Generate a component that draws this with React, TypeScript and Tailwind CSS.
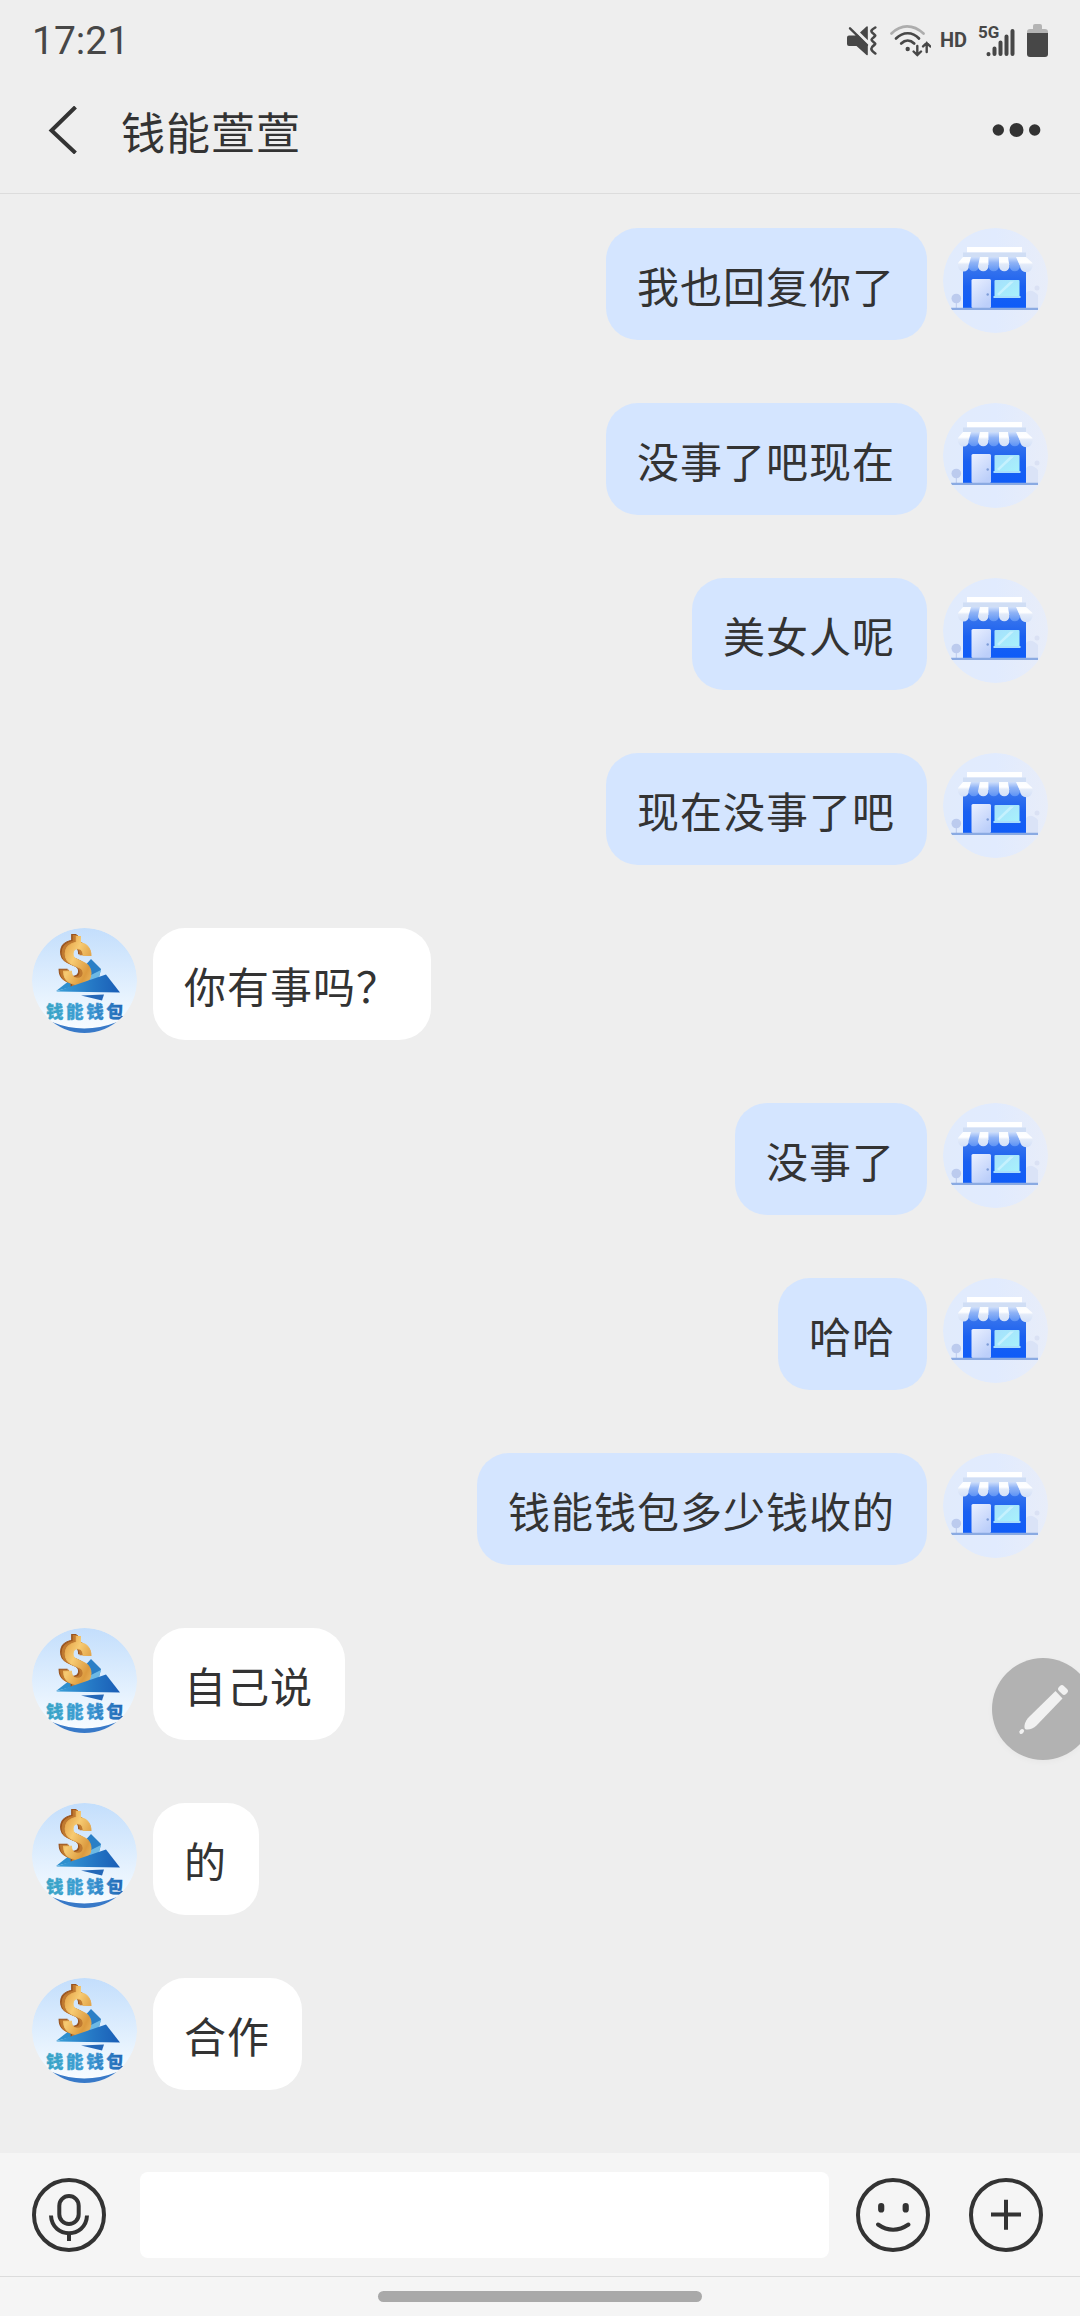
import { ReactNode } from "react";

type Message = {
  id: number;
  from: "me" | "them";
  text: string;
};

const MESSAGES: Message[] = [
  { id: 1, from: "me", text: "我也回复你了" },
  { id: 2, from: "me", text: "没事了吧现在" },
  { id: 3, from: "me", text: "美女人呢" },
  { id: 4, from: "me", text: "现在没事了吧" },
  { id: 5, from: "them", text: "你有事吗？" },
  { id: 6, from: "me", text: "没事了" },
  { id: 7, from: "me", text: "哈哈" },
  { id: 8, from: "me", text: "钱能钱包多少钱收的" },
  { id: 9, from: "them", text: "自己说" },
  { id: 10, from: "them", text: "的" },
  { id: 11, from: "them", text: "合作" },
];

const StatusBar = () => (
  <div className="flex h-20 items-start justify-between pl-8 pr-8 text-[#474747]">
    <span className="mt-[18px] font-['Roboto',sans-serif] text-[39px] leading-[46px]">17:21</span>

    <div className="mt-6 flex items-start">
      {/* Muted / vibrate */}
      <svg className="mt-0.5 h-[31px] w-[31px]" viewBox="0 0 31 31" fill="currentColor">
        <path d="M13 6.500 19.500.500q1.300-.700 1.300.700v13z" />
        <path d="M2 9.500h6l2.500-1L20.800 19v9.500q0 1.300-1.300.500L9.500 20H2a2 2 0 0 1-2-2v-6.500a2 2 0 0 1 2-2z" />
        <path d="M3 2.300 20 19" fill="none" stroke="currentColor" strokeWidth="2.4" strokeLinecap="round" />
        <path
          d="M28.300 1.500c-5 3-5 4-1.500 6.500 2 1.500 2 1.500 0 3.200-3 2.400-3 2.600 0 5 2 1.500 2 1.500 0 3.200-3.500 2.600-3.500 4.600 1.500 8.100"
          fill="none"
          stroke="currentColor"
          strokeWidth="2.6"
          strokeLinecap="round"
        />
      </svg>

      {/* Wifi with traffic arrows */}
      <svg className="ml-3 h-[33px] w-[41px]" viewBox="0 0 41 33" fill="none" stroke="currentColor" strokeLinecap="round">
        <path d="M1.500 9.500C11 0 23 0 33.500 9.500" stroke="#adadad" strokeWidth="2.7" />
        <path d="M6 14.500c7-7 16.500-7 23 0" strokeWidth="2.7" />
        <path d="M11.200 19.500c4-4 9-4 13 0" strokeWidth="2.7" />
        <circle cx="17.700" cy="25" r="2.2" fill="currentColor" stroke="none" />
        <path d="M27.300 22v9m-3.700-3.500 3.700 3.500 3.700-3.500M36.700 28v-9m-3.600 3.400 3.600-3.400 3.600 3.400" strokeWidth="2.4" />
      </svg>

      <span className="ml-[9px] mt-[5px] font-['Roboto',sans-serif] text-[20px] font-bold leading-[23px]">HD</span>

      {/* Signal */}
      <div className="relative ml-[11px] h-[33px] w-[37px]">
        <span className="absolute left-0 -top-[1px] font-['Roboto',sans-serif] text-[17px] font-bold leading-[18px]">5G</span>
        <svg className="h-[33px] w-[37px]" viewBox="0 0 37 33" fill="none" stroke="currentColor" strokeWidth="4" strokeLinecap="round">
          <path d="M10.500 30v.3M16.500 24.500V30M22.500 18.500V30M28.500 12.500V30M34.500 7V30" />
        </svg>
      </div>

      {/* Battery */}
      <svg className="ml-3 h-[33px] w-[21px]" viewBox="0 0 21 33">
        <path d="M8 0h5a2 2 0 0 1 2 2v3h3a3 3 0 0 1 3 3v2H0V8a3 3 0 0 1 3-3h3V2a2 2 0 0 1 2-2z" fill="#b4b4b4" />
        <path d="M0 9h21v21a3 3 0 0 1-3 3H3a3 3 0 0 1-3-3z" fill="currentColor" />
      </svg>
    </div>
  </div>
);

const Header = () => (
  <header className="h-[194px] border-b border-[#dcdcdc]">
    <StatusBar />
    <div className="flex h-[100px] items-center pl-12 pr-[38px] text-[#333]">
      <svg className="h-[48px] w-[30px]" viewBox="0 0 30 48" fill="none" stroke="currentColor" strokeWidth="4">
        <path d="M27.500 1 3.500 24.500l24 22.500" />
      </svg>
      <h1 className="ml-[43px] mt-px text-[44px] leading-[60px] tracking-[1px]">钱能萱萱</h1>
      <svg className="ml-auto h-[14px] w-[50px]" viewBox="0 0 50 14" fill="currentColor">
        <circle cx="6.3" cy="7" r="5.7" />
        <circle cx="24.500" cy="7" r="7" />
        <circle cx="42.7" cy="7" r="5.7" />
      </svg>
    </div>
  </header>
);

const StoreAvatar = () => (
  <svg className="h-[105px] w-[105px] shrink-0 rounded-full" viewBox="0 0 105 105">
    <defs>
      <linearGradient id="storeSky" x1="0" y1="0" x2="1" y2="0">
        <stop offset="0" stopColor="#e1ebfc" />
        <stop offset="0.5" stopColor="#e1ebfe" />
        <stop offset="1" stopColor="#e8edf9" />
      </linearGradient>
      <linearGradient id="storeWall" x1="0" y1="0" x2="0" y2="1">
        <stop offset="0" stopColor="#3d78ec" />
        <stop offset="0.5" stopColor="#1a60f0" />
        <stop offset="1" stopColor="#0f5cf8" />
      </linearGradient>
      <linearGradient id="storeDoor" x1="0" y1="0" x2="0.6" y2="1">
        <stop offset="0" stopColor="#eaf0ff" />
        <stop offset="1" stopColor="#bccffa" />
      </linearGradient>
      <linearGradient id="storeGlass" x1="0" y1="0" x2="1" y2="1">
        <stop offset="0" stopColor="#a5e0fc" />
        <stop offset="1" stopColor="#a8f2fb" />
      </linearGradient>
      <linearGradient id="awningWhite" x1="0" y1="0" x2="0" y2="1">
        <stop offset="0" stopColor="#fbfdff" />
        <stop offset="0.35" stopColor="#ffffff" />
        <stop offset="0.5" stopColor="#e3ebf9" />
        <stop offset="1" stopColor="#d3e0f8" />
      </linearGradient>
      <linearGradient id="awningBlue" x1="0" y1="0" x2="0" y2="1">
        <stop offset="0" stopColor="#cfdffb" />
        <stop offset="0.4" stopColor="#8fb3f6" />
        <stop offset="1" stopColor="#5d93f5" />
      </linearGradient>
    </defs>
    <circle cx="52.500" cy="52.500" r="52.500" fill="url(#storeSky)" />
    <path d="M83 80V65c4-4 8-2 12 2v13z" fill="#dae3f7" />
    <circle cx="94" cy="60" r="2.5" fill="#dae1f4" />
    <circle cx="13.3" cy="70.500" r="4.8" fill="#bccbee" />
    <path d="M13.300 72v8" stroke="#bccbee" />
    <path d="M20 37h63v43H20z" fill="url(#storeWall)" />
    <path d="M24 19h55v5.500H24z" fill="#fff" />
    <path d="M20 24.500h63v4.500H20z" fill="#d0def5" />
    {/* Awning stripes */}
    <path d="M20 29h10l-4 9a5.500 5.500 0 0 1-11 0v-3z" fill="url(#awningWhite)" />
    <path d="M28 29h9l-1 9a5.200 5.200 0 0 1-10.500 0z" fill="url(#awningBlue)" />
    <path d="M37 29h8.500v9a5.200 5.200 0 0 1-10.500 0z" fill="url(#awningWhite)" />
    <path d="M45.500 29h10.500v9a5.200 5.200 0 0 1-10.500 0z" fill="url(#awningBlue)" />
    <path d="M56 29h9l1.500 9a5.200 5.200 0 0 1-10.500 0z" fill="url(#awningWhite)" />
    <path d="M65 29h9l3 9a5.200 5.200 0 0 1-10.500 0z" fill="url(#awningBlue)" />
    <path d="M73 29h10l6.500 6v3a6 6 0 0 1-12.500 0z" fill="url(#awningWhite)" />
    <rect x="28.500" y="51" width="19.500" height="29" rx="1.5" fill="url(#storeDoor)" />
    <circle cx="44.7" cy="66.500" r="1.2" fill="#7f9dd8" />
    <rect x="51.500" y="52" width="25" height="17" rx="1" fill="url(#storeGlass)" />
    <path d="M54 66 67 53.500h4L56 67.500z" fill="#d1f5ff" opacity="0.7" />
    <path d="M50.500 68h27v2h-27z" fill="#a9dffc" />
    <path d="M8 79.700h87v2.300H8z" fill="#8aaae2" />
  </svg>
);

const WalletAvatar = () => (
  <svg className="h-[105px] w-[105px] shrink-0 rounded-full" viewBox="0 0 105 105">
    <defs>
      <linearGradient id="walletSky" x1="0" y1="0" x2="0" y2="1">
        <stop offset="0" stopColor="#c3defc" />
        <stop offset="0.6" stopColor="#e4f1fe" />
        <stop offset="1" stopColor="#fafdff" />
      </linearGradient>
      <linearGradient id="walletGold" x1="0" y1="0" x2="1" y2="1">
        <stop offset="0" stopColor="#d98a2c" />
        <stop offset="0.4" stopColor="#f7cb72" />
        <stop offset="0.7" stopColor="#dc9a3e" />
        <stop offset="1" stopColor="#f6cf7d" />
      </linearGradient>
      <linearGradient id="walletBlue" x1="0" y1="0" x2="1" y2="0">
        <stop offset="0" stopColor="#3aa0d8" />
        <stop offset="0.6" stopColor="#2476c4" />
        <stop offset="1" stopColor="#1a5db6" />
      </linearGradient>
      <linearGradient id="walletName" x1="0" y1="0" x2="1" y2="0">
        <stop offset="0" stopColor="#3aa6c6" />
        <stop offset="0.5" stopColor="#3d9bd4" />
        <stop offset="1" stopColor="#1f63b4" />
      </linearGradient>
    </defs>
    <circle cx="52.500" cy="52.500" r="52.500" fill="url(#walletSky)" />
    <path d="M59 31 69 41l-2 8-14 6-12-4z" fill="#2a7fc6" />
    <path d="m57 48 12-6-2 7-9 4z" fill="#6db9e4" />
    <path d="m24 63 18-14 6 8z" fill="#2e8fce" />
    {/* Coin symbol, dark copies behind give it depth */}
    <g fontFamily="Roboto, sans-serif" fontWeight="700" fontSize="57">
      <text x="24.500" y="54" fill="#9a531d" stroke="#9a531d" strokeWidth="1">$</text>
      <text x="26" y="54.500" fill="#c07a30" stroke="#c07a30" strokeWidth="1">$</text>
      <text x="29" y="55.500" fill="url(#walletGold)" stroke="url(#walletGold)" strokeWidth="0.8">$</text>
    </g>
    <path d="m24 63.500 50-17 14 18z" fill="url(#walletBlue)" />
    <path d="m49 67.500 23-1-2 6z" fill="#2467b8" />
    <text
      x="14"
      y="90"
      fill="url(#walletName)"
      stroke="url(#walletName)"
      strokeWidth="0.3"
      fontFamily="'Noto Sans CJK SC', sans-serif"
      fontWeight="900"
      fontSize="17.500"
      letterSpacing="2.6"
    >
      钱能钱包
    </text>
    <path d="M20 94q32 13 65 0l-6 11H26z" fill="#3879c8" />
  </svg>
);

const MessageRow = ({ from, text }: Message) => {
  const mine = from === "me";

  return (
    <li className={`flex items-start gap-4 ${mine ? "flex-row-reverse" : ""}`}>
      {mine ? <StoreAvatar /> : <WalletAvatar />}
      <p
        className={`h-[112px] rounded-[32px] pl-[31px] pr-8 pt-[26px] text-[42px] leading-[62px] tracking-[1px] text-[#333] ${
          mine ? "bg-[#d4e5ff]" : "bg-white"
        }`}
      >
        {text}
      </p>
    </li>
  );
};

const RoundIcon = ({ children }: { children: ReactNode }) => (
  <svg className="h-[74px] w-[74px] shrink-0" viewBox="0 0 74 74" fill="none" stroke="#333" strokeWidth="4">
    <circle cx="37" cy="37" r="35" />
    {children}
  </svg>
);

const Composer = () => (
  <footer className="h-[163px] bg-[#f5f5f5]">
    <div className="flex h-[124px] items-center border-b border-[#dcdcdc] pl-8 pr-[37px]">
      <RoundIcon>
        <rect x="27.300" y="18" width="19.400" height="28" rx="9.7" />
        <path d="M19 37.500c1 23.500 35 23.500 36 0M37 54.500V63" />
      </RoundIcon>
      <input className="ml-[34px] h-[86px] w-[689px] rounded-lg bg-white outline-none" />
      <div className="ml-auto flex gap-[39.5px]">
        <RoundIcon>
          <path d="M25.200 28v3.500M49.700 28v3.500" strokeWidth="6.2" strokeLinecap="round" />
          <path d="M22 46.500q15 10.500 30.500 0" strokeLinecap="round" />
        </RoundIcon>
        <RoundIcon>
          <path d="M22 36.500h30M37 21.700v30" />
        </RoundIcon>
      </div>
    </div>
    <div className="mx-auto mt-3.5 h-[11px] w-[324px] rounded-full bg-[#a9a9a9]" />
  </footer>
);

// Floating shortcut, partly past the right edge of the screen
const PenButton = () => (
  <button className="absolute left-[992px] top-[1658px] h-[102px] w-[102px] rounded-full bg-[#b2b2b2] shadow-[0_2px_6px_rgba(0,0,0,0.03)]">
    <svg className="h-[102px] w-[102px]" viewBox="0 0 102 102" fill="#f1f1f1">
      <path d="m63.500 33 7 7.500-26 27c-3.500 3.500-9 5-11.500 3.500-1.500-2.500 0-8 4-12z" />
      <rect x="66" y="28.500" width="10" height="7" rx="2.8" transform="rotate(45 71 32)" />
      <ellipse cx="29.7" cy="73.500" rx="2.7" ry="2" transform="rotate(-45 29.7 73.5)" />
    </svg>
  </button>
);

export default function App() {
  return (
    <div className="relative flex h-[2316px] w-[1080px] flex-col overflow-hidden bg-[#eee] font-['Noto_Sans_CJK_SC',sans-serif]">
      <Header />
      <main className="flex-1 px-8 pt-[34px]">
        <ul className="flex flex-col gap-[63px]">
          {MESSAGES.map((message) => (
            <MessageRow key={message.id} {...message} />
          ))}
        </ul>
      </main>
      <Composer />
      <PenButton />
    </div>
  );
}
